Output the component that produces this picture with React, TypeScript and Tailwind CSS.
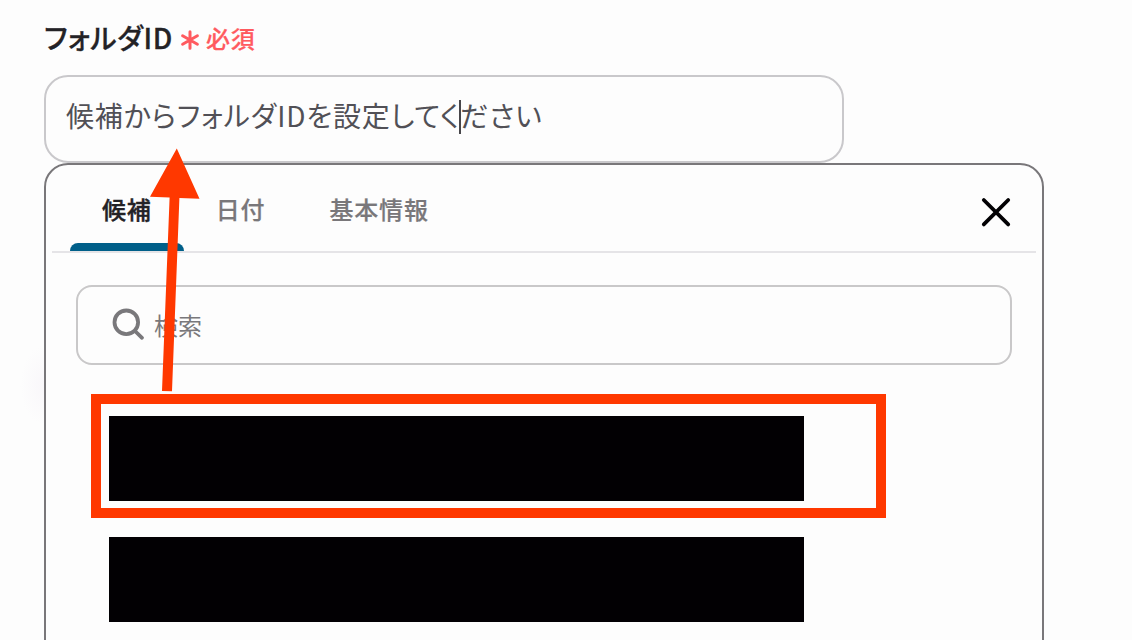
const TABS = ["候補", "日付", "基本情報"];

const RequiredMark = () => (
  <svg width="20" height="20" viewBox="0 0 20 20" className="mt-[7px]">
    <path
      d="M10 1.8V18.2M2.6 5.8L17.4 14.2M17.4 5.8L2.6 14.2"
      stroke="#ff5a5f"
      strokeWidth="3"
      strokeLinecap="round"
    />
  </svg>
);

const FolderInput = () => (
  <div className="h-[88px] w-[800px] rounded-3xl border-2 border-[#c9c8cb] pt-[14px] pl-5">
    <div className="relative w-fit text-[28px] leading-[48px] tracking-[0.84px] text-[#515056]">
      候補からフォルダIDを設定してください
      {/* text cursor */}
      <span className="absolute top-[9px] left-[393px] h-[34px] w-[2px] bg-[#47464a]" />
    </div>
  </div>
);

const SearchBox = () => (
  <div className="mx-[30px] mt-8 flex h-20 items-center rounded-2xl border-2 border-[#c9c8c9] pl-[33px]">
    <svg width="34" height="34" viewBox="0 0 34 34" fill="none">
      <circle cx="15.3" cy="14.3" r="11.8" stroke="#79787b" strokeWidth="3.8" />
      <path
        d="M24 23L31 29.8"
        stroke="#79787b"
        strokeWidth="3.8"
        strokeLinecap="round"
      />
    </svg>
    <span className="ml-[9px] text-[24px] text-[#79787b]">検索</span>
  </div>
);

const SuggestPanel = () => (
  <div className="h-[560px] w-[1000px] rounded-3xl border-2 border-[#79777a]">
    <div className="mx-1.5 flex h-[88px] justify-between border-b-2 border-[#e5e4e7] pl-[18px]">
      <div className="flex">
        {TABS.map((tab, i) => (
          <div
            key={tab}
            className={
              i === 0
                ? "flex flex-col justify-between text-[#232226] [-webkit-text-stroke:0.4px]"
                : "flex flex-col justify-between text-[#79777a] [-webkit-text-stroke:0.2px]"
            }
          >
            <span className="px-8 pt-[26px] text-[24px] leading-9 font-medium tracking-[0.84px]">
              {tab}
            </span>
            {i === 0 && <span className="h-2 rounded-t-lg bg-[#005f89]" />}
          </div>
        ))}
      </div>
      <button className="mt-[31px] mr-6 h-8 w-8" aria-label="閉じる">
        <svg width="32" height="32" viewBox="0 0 32 32">
          <path
            d="M3.8 4L28.2 28.4M28.2 4L3.8 28.4"
            stroke="#020103"
            strokeWidth="3.8"
            strokeLinecap="round"
          />
        </svg>
      </button>
    </div>
    <SearchBox />
    <div className="mt-[51px] ml-[63px] flex flex-col gap-9">
      <div className="h-[85px] w-[695px] bg-[#020003]" />
      <div className="h-[85px] w-[695px] bg-[#020003]" />
    </div>
  </div>
);

const Annotations = () => (
  <>
    <div className="absolute top-[394px] left-[91px] h-[124px] w-[795px] border-10 border-[#ff3800]" />
    <svg
      className="absolute top-[140px] left-[140px]"
      width="70"
      height="260"
      viewBox="140 140 70 260"
    >
      <path
        d="M176.8 148.5L199.5 198.8L179.4 198L172 391.3L162 391L169.6 197.5L150 196.8Z"
        fill="#ff3800"
      />
    </svg>
  </>
);

const App = () => {
  return (
    <div className="relative h-[640px] w-[1132px] overflow-hidden bg-[#fdfdfd] pl-11 font-['Noto_Sans_CJK_JP',sans-serif] [font-feature-settings:'palt']">
      {/* faint shadow left of the panel */}
      <div className="absolute top-[345px] left-[20px] h-[80px] w-[24px] bg-radial-[at_100%_50%] from-[#f9f7fa] to-[#fdfdfd] to-70%" />
      <div className="flex h-[75px] items-center pb-[2px]">
        <span className="text-[28px] font-medium tracking-[0.6px] text-[#232226] [-webkit-text-stroke:0.3px]">
          フォルダID
        </span>
        <span className="ml-[7px] flex items-center gap-1.5 text-[#ff5a5f]">
          <RequiredMark />
          <span className="mt-[2px] text-[24px] font-medium tracking-[0.8px] [-webkit-text-stroke:0.2px]">
            必須
          </span>
        </span>
      </div>
      <FolderInput />
      <SuggestPanel />
      <Annotations />
    </div>
  );
};

export default App;
